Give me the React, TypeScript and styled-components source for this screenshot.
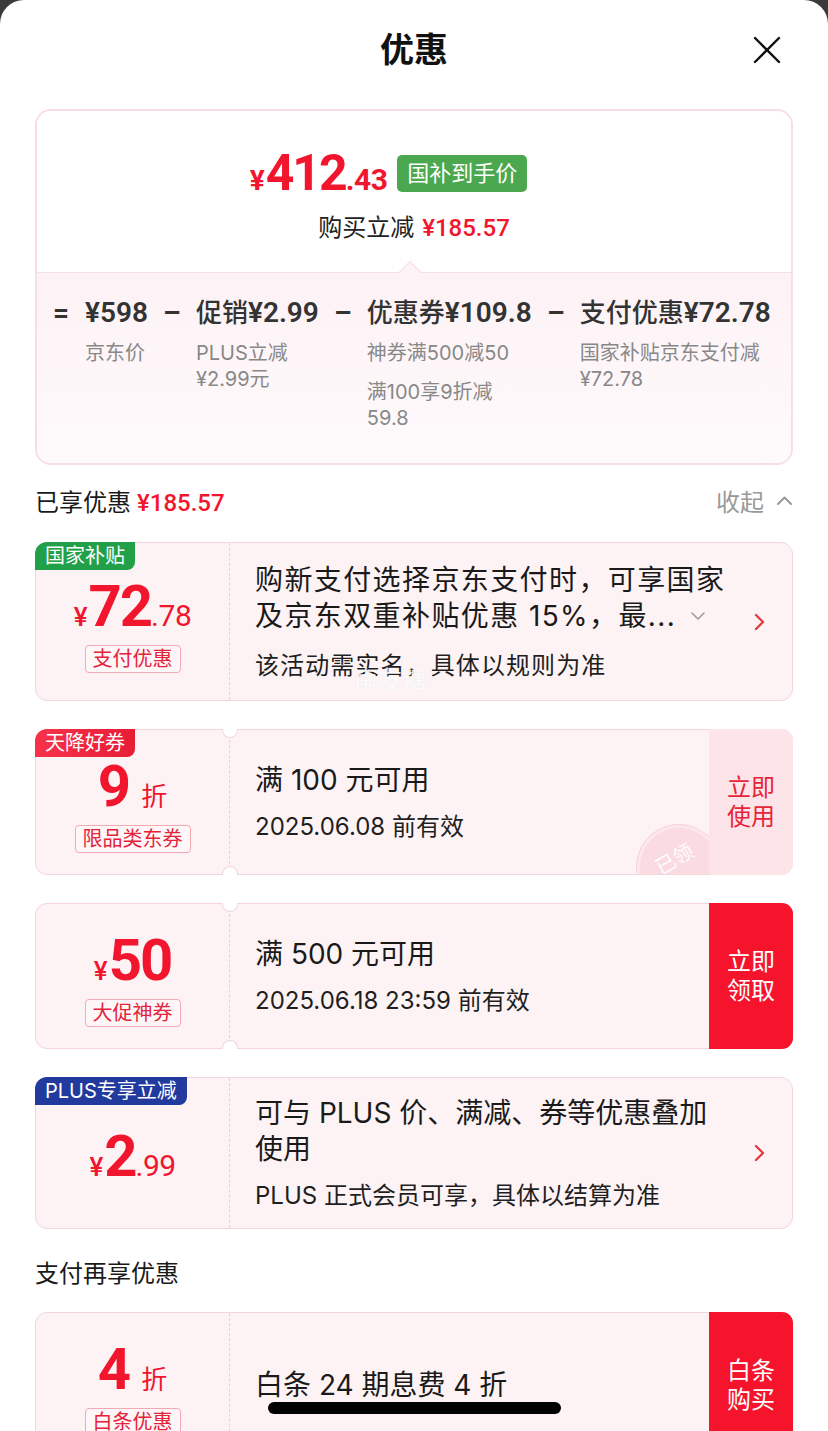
import React from "react";
import styled, { createGlobalStyle } from "styled-components";

const RED = "#f1162e";
const TEXT_FONT = `Inter, "Noto Sans CJK SC", sans-serif`;
const NUM_FONT = `Roboto, "Noto Sans CJK SC", sans-serif`;

const GlobalStyle = createGlobalStyle`
  html, body { margin: 0; padding: 0; background: #3a3a3a; }
  body { font-family: ${TEXT_FONT}; color: #1a1a1a; -webkit-font-smoothing: antialiased; }
  * { box-sizing: border-box; }
`;

const Sheet = styled.div`
  position: relative;
  height: 1431px;
  overflow: hidden;
  background: #fff;
  border-radius: 24px 24px 0 0;
  padding: 0 35px;
`;

const Header = styled.header`
  height: 100px;
  display: grid;
  grid-template-columns: 1fr auto 1fr;
  align-items: center;
`;

const Title = styled.h1`
  grid-column: 2;
  margin: 0;
  font-size: 34px;
  font-weight: 600;
  color: #111;
  line-height: 40px;
`;

const CloseButton = styled.button`
  grid-column: 3;
  justify-self: end;
  margin-right: 10px;
  width: 32px;
  height: 32px;
  padding: 0;
  border: none;
  background: transparent;
  display: flex;
  align-items: center;
  justify-content: center;
`;

const PriceCard = styled.section`
  margin-top: 9px;
  border: 2px solid #f8dde3;
  border-radius: 16px;
  overflow: hidden;
`;

const PriceTop = styled.div`
  height: 161px;
  padding-top: 37px;
  display: flex;
  flex-direction: column;
  align-items: center;
  background: #fff;
`;

const PriceRow = styled.div`
  height: 50px;
  display: flex;
  align-items: center;
  gap: 10px;
  margin-right: 51px;
`;

const BigPrice = styled.div`
  display: flex;
  align-items: baseline;
  color: ${RED};
  font-family: ${NUM_FONT};
  font-weight: 700;
  line-height: 1;
`;

const Yen = styled.span<{ $size: number; $weight?: number }>`
  font-size: ${(p) => p.$size}px;
  font-weight: ${(p) => p.$weight ?? 700};
  margin-right: 1px;
`;

const IntPart = styled.span<{ $size: number }>`
  font-size: ${(p) => p.$size}px;
  font-weight: 700;
  letter-spacing: -2px;
`;

const DecPart = styled.span<{ $size: number; $weight?: number }>`
  font-size: ${(p) => p.$size}px;
  font-weight: ${(p) => p.$weight ?? 700};
  letter-spacing: -0.5px;
`;

const GreenLabel = styled.span`
  height: 37px;
  line-height: 37px;
  padding: 0 10px;
  border-radius: 5px;
  background: #4ba84e;
  color: #fff;
  font-size: 22px;
`;

const SaveLine = styled.div`
  margin-top: 14px;
  font-size: 24px;
  line-height: 32px;
  color: #222;
  display: flex;
  align-items: baseline;
  gap: 8px;
`;

const RedNum = styled.span<{ $size?: number }>`
  color: ${RED};
  font-family: ${NUM_FONT};
  font-weight: 500;
  font-size: ${(p) => p.$size ?? 24}px;
`;

const PriceBottom = styled.div`
  position: relative;
  background: linear-gradient(180deg, #fdf2f5 0%, #fefafb 100%);
  border-top: 1px solid #f6dfe5;
  padding: 22px 12px 32px;
`;

const Pointer = styled.span`
  position: absolute;
  top: -9px;
  left: 365px;
  width: 16px;
  height: 16px;
  background: #fdf2f5;
  border-left: 1px solid #f6dfe5;
  border-top: 1px solid #f6dfe5;
  transform: rotate(45deg);
`;

const Formula = styled.div`
  display: flex;
  align-items: flex-start;
  gap: 12px;
`;

const Op = styled.span`
  width: 24px;
  text-align: center;
  font-family: ${NUM_FONT};
  font-size: 28px;
  font-weight: 700;
  line-height: 36px;
  color: #333;
`;

const Term = styled.div`
  display: flex;
  flex-direction: column;
`;

const TermMain = styled.div`
  font-size: 26px;
  line-height: 36px;
  font-weight: 500;
  color: #333;
  white-space: nowrap;
`;

const TermNum = styled.span`
  font-family: ${NUM_FONT};
  font-size: 28px;
  font-weight: 600;
`;

const TermNote = styled.div`
  margin-top: 9px;
  font-size: 20px;
  line-height: 26px;
  color: #888;
  white-space: nowrap;
  & + & {
    margin-top: 13px;
  }
`;

const SectionHead = styled.div<{ $top: number; $bottom: number }>`
  height: 32px;
  margin: ${(p) => p.$top}px 0 ${(p) => p.$bottom}px;
  display: flex;
  align-items: center;
  justify-content: space-between;
  font-size: 24px;
  color: #1a1a1a;
`;

const SectionTitle = styled.div`
  display: flex;
  align-items: baseline;
  gap: 6px;
`;

const Collapse = styled.div`
  display: flex;
  align-items: center;
  gap: 12px;
  color: #999;
`;

const CouponList = styled.div`
  display: flex;
  flex-direction: column;
  gap: 28px;
`;

const Coupon = styled.div<{ $h: number }>`
  position: relative;
  min-height: ${(p) => p.$h}px;
  display: grid;
  grid-template-columns: 194px 1fr auto;
  border: 1px solid #f3d5db;
  border-radius: 12px;
  background: #fdf3f5;
`;

const Badge = styled.span<{ $bg: string }>`
  position: absolute;
  top: -1px;
  left: -1px;
  height: 28px;
  line-height: 28px;
  padding: 0 10px;
  border-radius: 12px 0 8px 0;
  background: ${(p) => p.$bg};
  color: #fff;
  font-size: 20px;
  z-index: 2;
`;

const Notch = styled.span<{ $side: "top" | "bottom" }>`
  position: absolute;
  left: 186px;
  width: 16px;
  height: 9px;
  background: #fff;
  border: 1px solid #f3d5db;
  ${(p) =>
    p.$side === "top"
      ? "top: -1px; border-top: none; border-radius: 0 0 8px 8px;"
      : "bottom: -1px; border-bottom: none; border-radius: 8px 8px 0 0;"}
  z-index: 2;
`;

const Left = styled.div`
  display: flex;
  flex-direction: column;
  align-items: center;
  justify-content: center;
  padding-top: 6px;
  border-right: 1px dashed #efcfd6;
`;

const Discount = styled.div`
  display: flex;
  align-items: baseline;
  color: ${RED};
  font-family: ${NUM_FONT};
  line-height: 1;
`;

const Zhe = styled.span`
  margin-left: 12px;
  font-family: ${TEXT_FONT};
  font-size: 26px;
`;

const OutlineTag = styled.span`
  margin-top: 10px;
  height: 28px;
  line-height: 26px;
  padding: 0 7px;
  border: 1px solid #f3a9b4;
  border-radius: 4px;
  background: #fff6f8;
  color: #e2233a;
  font-size: 20px;
`;

const Body = styled.div`
  position: relative;
  overflow: hidden;
  display: flex;
  flex-direction: column;
  justify-content: center;
  padding: 0 20px 0 25px;
`;

const CouponTitle = styled.div<{ $spacing?: number }>`
  font-size: 28px;
  line-height: 36px;
  color: #1a1a1a;
  white-space: nowrap;
  letter-spacing: ${(p) => p.$spacing ?? 0}px;
  display: flex;
  flex-direction: column;
`;

const TitleLine = styled.span`
  display: flex;
  align-items: center;
`;

const CouponSub = styled.div<{ $spacing?: number; $gap?: number }>`
  margin-top: ${(p) => p.$gap ?? 13}px;
  font-size: 24px;
  line-height: 32px;
  color: #1f1f1f;
  white-space: nowrap;
  letter-spacing: ${(p) => p.$spacing ?? 0}px;
`;

const Arrow = styled.div`
  display: flex;
  align-items: center;
  padding: 0 27px 0 10px;
`;

const Action = styled.div<{ $solid?: boolean }>`
  width: 84px;
  display: flex;
  align-items: center;
  justify-content: center;
  text-align: center;
  font-size: 24px;
  line-height: 29px;
  border-radius: 0 11px 11px 0;
  margin: -1px -1px -1px 0;
  background: ${(p) => (p.$solid ? "#f5142c" : "#fde4e9")};
  color: ${(p) => (p.$solid ? "#fff" : "#e8243a")};
`;

const Stamp = styled.div`
  position: absolute;
  left: 407px;
  top: 95px;
  width: 84px;
  height: 84px;
  border-radius: 50%;
  background: #fad7de;
  border: 3px solid #fce6ea;
  box-shadow: 0 0 0 1px #f8cdd5;
  display: flex;
  align-items: flex-start;
  padding-top: 14px;
  justify-content: center;
  color: #fff;
  font-size: 20px;
  transform: rotate(-30deg);
  opacity: 0.85;
`;

const Watermark = styled.span`
  position: absolute;
  left: 124px;
  top: 122px;
  font-size: 24px;
  line-height: 30px;
  color: rgba(255, 255, 255, 0.9);
  text-shadow: 0 0 1px rgba(0, 0, 0, 0.08);
`;

const HomeIndicator = styled.div`
  position: fixed;
  left: 50%;
  bottom: 17px;
  width: 293px;
  height: 12px;
  margin-left: -146px;
  border-radius: 6px;
  background: #000;
`;

const ChevronRight = () => (
  <svg width="11" height="18" viewBox="0 0 11 18">
    <path d="M2 2l7 7-7 7" fill="none" stroke="#e4393c" strokeWidth="2.3" strokeLinecap="round" strokeLinejoin="round" />
  </svg>
);

const ChevronDownSmall = () => (
  <svg width="16" height="10" viewBox="0 0 16 10" style={{ marginLeft: 14 }}>
    <path d="M2 2l6 6 6-6" fill="none" stroke="#9a9a9a" strokeWidth="1.5" strokeLinecap="round" strokeLinejoin="round" />
  </svg>
);

const ChevronUp = () => (
  <svg width="17" height="11" viewBox="0 0 17 11">
    <path d="M2 9l6.5-6.5L15 9" fill="none" stroke="#999" strokeWidth="2" strokeLinecap="round" strokeLinejoin="round" />
  </svg>
);

const CloseIcon = () => (
  <svg width="28" height="28" viewBox="0 0 28 28">
    <path d="M2 2l24 24M26 2L2 26" stroke="#111" strokeWidth="2.4" strokeLinecap="round" />
  </svg>
);

export default function App() {
  return (
    <>
      <GlobalStyle />
      <Sheet>
        <Header>
          <Title>优惠</Title>
          <CloseButton aria-label="关闭">
            <CloseIcon />
          </CloseButton>
        </Header>

        <PriceCard>
          <PriceTop>
            <PriceRow>
              <BigPrice>
                <Yen $size={28}>¥</Yen>
                <IntPart $size={50}>412</IntPart>
                <DecPart $size={30}>.43</DecPart>
              </BigPrice>
              <GreenLabel>国补到手价</GreenLabel>
            </PriceRow>
            <SaveLine>
              购买立减
              <RedNum>¥185.57</RedNum>
            </SaveLine>
          </PriceTop>
          <PriceBottom>
            <Pointer />
            <Formula>
              <Op>=</Op>
              <Term>
                <TermMain>
                  <TermNum>¥598</TermNum>
                </TermMain>
                <TermNote>京东价</TermNote>
              </Term>
              <Op>–</Op>
              <Term>
                <TermMain>
                  促销<TermNum>¥2.99</TermNum>
                </TermMain>
                <TermNote>
                  PLUS立减
                  <br />
                  ¥2.99元
                </TermNote>
              </Term>
              <Op>–</Op>
              <Term>
                <TermMain>
                  优惠券<TermNum>¥109.8</TermNum>
                </TermMain>
                <TermNote>神券满500减50</TermNote>
                <TermNote>
                  满100享9折减
                  <br />
                  59.8
                </TermNote>
              </Term>
              <Op>–</Op>
              <Term>
                <TermMain>
                  支付优惠<TermNum>¥72.78</TermNum>
                </TermMain>
                <TermNote>
                  国家补贴京东支付减
                  <br />
                  ¥72.78
                </TermNote>
              </Term>
            </Formula>
          </PriceBottom>
        </PriceCard>

        <SectionHead $top={19} $bottom={26}>
          <SectionTitle>
            已享优惠
            <RedNum>¥185.57</RedNum>
          </SectionTitle>
          <Collapse>
            收起
            <ChevronUp />
          </Collapse>
        </SectionHead>

        <CouponList>
          <Coupon $h={159}>
            <Badge $bg="#21a049">国家补贴</Badge>
            <Left>
              <Discount>
                <Yen $size={26} $weight={500}>¥</Yen>
                <IntPart $size={58}>72</IntPart>
                <DecPart $size={30} $weight={400}>.78</DecPart>
              </Discount>
              <OutlineTag>支付优惠</OutlineTag>
            </Left>
            <Body>
              <CouponTitle $spacing={1.4}>
                <TitleLine>购新支付选择京东支付时，可享国家</TitleLine>
                <TitleLine>
                  及京东双重补贴优惠 15%，最...
                  <ChevronDownSmall />
                </TitleLine>
              </CouponTitle>
              <CouponSub $spacing={1.1} $gap={16}>该活动需实名，具体以规则为准</CouponSub>
              <Watermark>南友糖</Watermark>
            </Body>
            <Arrow>
              <ChevronRight />
            </Arrow>
          </Coupon>

          <Coupon $h={146}>
            <Badge $bg="linear-gradient(90deg, #f6324a, #e71d36)">天降好券</Badge>
            <Notch $side="top" />
            <Notch $side="bottom" />
            <Left>
              <Discount>
                <IntPart $size={58}>9</IntPart>
                <Zhe>折</Zhe>
              </Discount>
              <OutlineTag>限品类东券</OutlineTag>
            </Left>
            <Body>
              <CouponTitle>满 100 元可用</CouponTitle>
              <CouponSub>2025.06.08 前有效</CouponSub>
              <Stamp>已领</Stamp>
            </Body>
            <Action>
              立即
              <br />
              使用
            </Action>
          </Coupon>

          <Coupon $h={146}>
            <Notch $side="top" />
            <Notch $side="bottom" />
            <Left>
              <Discount>
                <Yen $size={26} $weight={500}>¥</Yen>
                <IntPart $size={58}>50</IntPart>
              </Discount>
              <OutlineTag>大促神券</OutlineTag>
            </Left>
            <Body>
              <CouponTitle>满 500 元可用</CouponTitle>
              <CouponSub>2025.06.18 23:59 前有效</CouponSub>
            </Body>
            <Action $solid>
              立即
              <br />
              领取
            </Action>
          </Coupon>

          <Coupon $h={152}>
            <Badge $bg="#223a9e">PLUS专享立减</Badge>
            <Left>
              <Discount>
                <Yen $size={26} $weight={500}>¥</Yen>
                <IntPart $size={58}>2</IntPart>
                <DecPart $size={30} $weight={400}>.99</DecPart>
              </Discount>
            </Left>
            <Body>
              <CouponTitle>
                <TitleLine>可与 PLUS 价、满减、券等优惠叠加</TitleLine>
                <TitleLine>使用</TitleLine>
              </CouponTitle>
              <CouponSub>PLUS 正式会员可享，具体以结算为准</CouponSub>
            </Body>
            <Arrow>
              <ChevronRight />
            </Arrow>
          </Coupon>
        </CouponList>

        <SectionHead $top={26} $bottom={25}>
          <SectionTitle>支付再享优惠</SectionTitle>
        </SectionHead>

        <Coupon $h={146}>
          <Left>
            <Discount>
              <IntPart $size={58}>4</IntPart>
              <Zhe>折</Zhe>
            </Discount>
            <OutlineTag>白条优惠</OutlineTag>
          </Left>
          <Body>
            <CouponTitle>白条 24 期息费 4 折</CouponTitle>
          </Body>
          <Action $solid>
            白条
            <br />
            购买
          </Action>
        </Coupon>

        <HomeIndicator />
      </Sheet>
    </>
  );
}
